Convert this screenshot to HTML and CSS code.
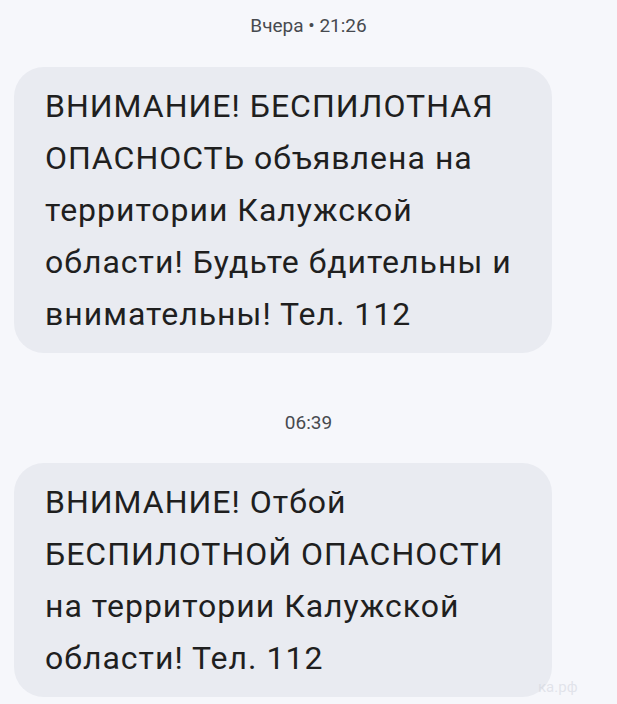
FILE: index.html
```html
<!DOCTYPE html>
<html>
  <head>
    <meta charset='UTF-8'>
    <meta name='viewport' content='width=device-width, initial-scale=1.0'>
    <title>Сообщения</title>
    <link rel="stylesheet" href="styles.css">
  </head>
  <body>
    <div class='thread'>
      <div class='stamp stamp--first'>Вчера • 21:26</div>
      <div class='bubble'>
        <p class='bubble__text'>ВНИМАНИЕ! БЕСПИЛОТНАЯ ОПАСНОСТЬ объявлена на территории Калужской области! Будьте бдительны и внимательны! Тел. 112</p>
      </div>

      <div class='stamp'>06:39</div>
      <div class='bubble'>
        <p class='bubble__text'>ВНИМАНИЕ! Отбой БЕСПИЛОТНОЙ ОПАСНОСТИ на территории Калужской области! Тел. 112</p>
      </div>

      <div class='watermark'>ка.рф</div>
    </div>
  </body>
</html>
```

FILE: styles.css
```css
html,
body {
	margin: 0;
}

body {
	background: #f6f7fb;
	font-family: Roboto, 'Noto Sans', sans-serif;
	color: #1f1f1f;
	overflow: hidden;
}

.thread {
	position: relative;
	display: flex;
	flex-direction: column;
	align-items: flex-start;
	width: 617px;
	height: 704px;
	padding: 0 14px;
	box-sizing: border-box;
}

  .stamp {
  	align-self: center;
  	padding: 59px 0 29px;
  	font-size: 19px;
  	line-height: 22px;
  	color: #474a4f;
  }

  .stamp--first {
  	padding-top: 15px;
  	padding-bottom: 30px;
  }

  .bubble {
  	width: 538px;
  	box-sizing: border-box;
  	padding: 13px 31px;
  	background: #e9ebf1;
  	border-radius: 30px;
  }

    .bubble__text {
    	margin: 0;
    	font-size: 32px;
    	line-height: 52px;
    	letter-spacing: 1px;
    }

  .watermark {
  	position: absolute;
  	left: 538px;
  	top: 678px;
  	font-size: 15px;
  	color: rgba(205, 208, 217, 0.5);
  }
```
